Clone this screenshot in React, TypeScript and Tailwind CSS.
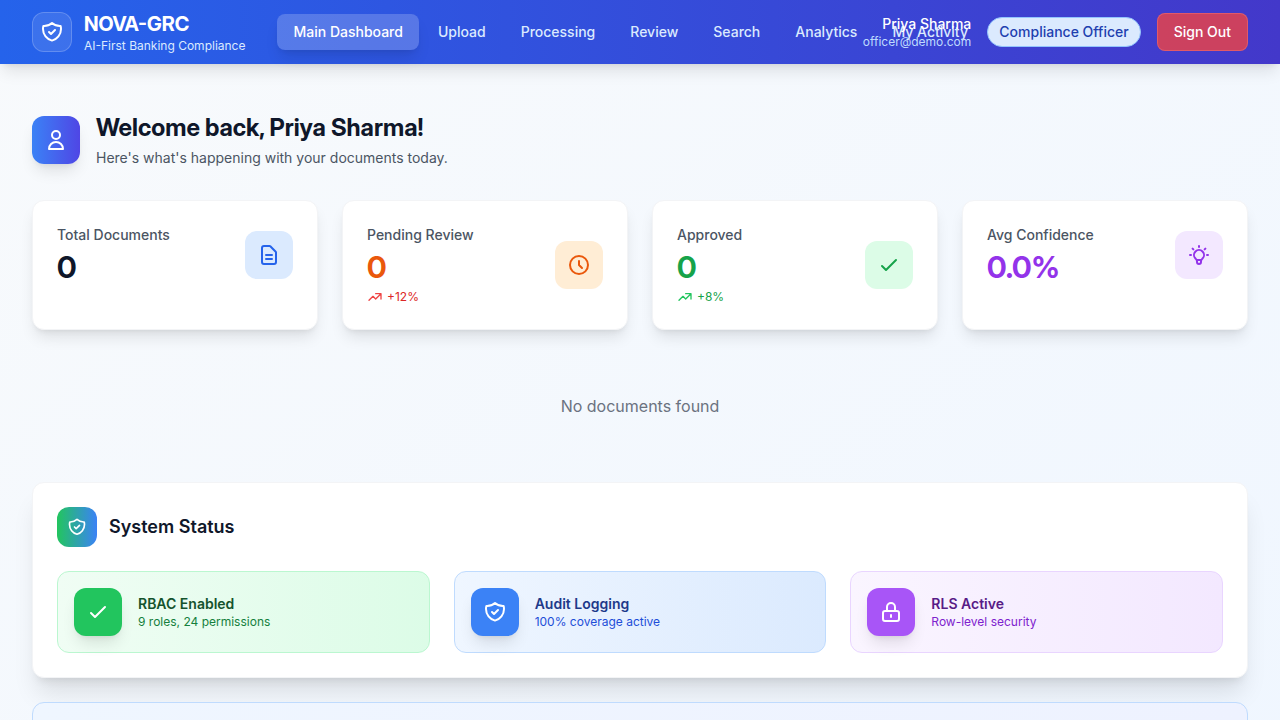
const paths = {
  shield:
    'M9 12l2 2 4-4m5.618-4.016A11.955 11.955 0 0112 2.944a11.955 11.955 0 01-8.618 3.04A12.02 12.02 0 003 9c0 5.591 3.824 10.29 9 11.622 5.176-1.332 9-6.03 9-11.622 0-1.042-.133-2.052-.382-3.016z',
  user: 'M16 7a4 4 0 11-8 0 4 4 0 018 0zM12 14a7 7 0 00-7 7h14a7 7 0 00-7-7z',
  document:
    'M9 12h6m-6 4h6m2 5H7a2 2 0 01-2-2V5a2 2 0 012-2h5.586a1 1 0 01.707.293l5.414 5.414a1 1 0 01.293.707V19a2 2 0 01-2 2z',
  clock: 'M12 8v4l3 3m6-3a9 9 0 11-18 0 9 9 0 0118 0z',
  check: 'M5 13l4 4L19 7',
  trend: 'M13 7h8m0 0v8m0-8l-8 8-4-4-6 6',
  bulb: 'M9.663 17h4.673M12 3v1m6.364 1.636l-.707.707M21 12h-1M4 12H3m3.343-5.657l-.707-.707m2.828 9.9a5 5 0 117.072 0l-.548.547A3.374 3.374 0 0014 18.469V19a2 2 0 11-4 0v-.531c0-.895-.356-1.754-.988-2.386l-.548-.547z',
  lock: 'M12 15v2m-6 4h12a2 2 0 002-2v-6a2 2 0 00-2-2H6a2 2 0 00-2 2v6a2 2 0 002 2zm10-10V7a4 4 0 00-8 0v4h8z',
};

type IconName = keyof typeof paths;

function Icon({ name, className = 'size-6' }: { name: IconName; className?: string }) {
  return (
    <svg
      className={className}
      viewBox="0 0 24 24"
      fill="none"
      stroke="currentColor"
      strokeWidth={2}
      strokeLinecap="round"
      strokeLinejoin="round"
      aria-hidden="true"
    >
      <path d={paths[name]} />
    </svg>
  );
}

const navItems = ['Main Dashboard', 'Upload', 'Processing', 'Review', 'Search', 'Analytics', 'My Activity'];

function Header() {
  return (
    <header className="relative z-10 bg-linear-to-r/srgb from-[#2563eb] to-[#4338ca] shadow-lg">
      <div className="flex h-16 items-center justify-between px-8">
        <div className="flex min-w-0 items-center gap-8">
          <div className="flex shrink-0 items-center gap-3">
            <div className="flex size-10 items-center justify-center rounded-xl border border-white/20 bg-white/10 text-white">
              <Icon name="shield" />
            </div>
            <div className="whitespace-nowrap">
              <div className="font-['Inter_Display','Inter',sans-serif] text-xl font-bold text-white">NOVA-GRC</div>
              <div className="text-xs text-[#dbeafe]">AI-First Banking Compliance</div>
            </div>
          </div>
          <nav className="flex shrink-0 gap-[3px]">
            {navItems.map((item, i) => (
              <button
                key={item}
                type="button"
                aria-current={i === 0 ? 'page' : undefined}
                className={
                  i === 0
                    ? 'rounded-lg bg-white/20 px-4 py-2 text-sm font-medium whitespace-nowrap text-white shadow-lg'
                    : 'rounded-lg px-4 py-2 text-sm font-medium whitespace-nowrap text-[#dbeafe]'
                }
              >
                {item}
              </button>
            ))}
          </nav>
        </div>
        <div className="flex shrink-0 items-center gap-4">
          <div className="text-right">
            <div className="text-sm font-medium text-white">Priya Sharma</div>
            <div className="text-xs text-[#bfdbfe]">officer@demo.com</div>
          </div>
          <span className="rounded-full border border-[#93c5fd] bg-[#dbeafe] px-[11px] py-1 text-sm font-medium text-[#1e40af]">
            Compliance Officer
          </span>
          <button
            type="button"
            className="rounded-lg border border-[#f87171]/50 bg-[#ef4444]/80 px-4 py-2 text-sm font-medium text-white"
          >
            Sign Out
          </button>
        </div>
      </div>
    </header>
  );
}

interface Stat {
  label: string;
  value: string;
  icon: IconName;
  valueClass: string;
  iconClass: string;
  trend?: string;
  trendIconClass?: string;
  trendClass?: string;
}

const stats: Stat[] = [
  {
    label: 'Total Documents',
    value: '0',
    icon: 'document',
    valueClass: 'text-[#0f172a]',
    iconClass: 'bg-[#dbeafe] text-[#2563eb]',
  },
  {
    label: 'Pending Review',
    value: '0',
    icon: 'clock',
    valueClass: 'text-[#ea580c]',
    iconClass: 'bg-[#ffedd5] text-[#ea580c]',
    trend: '+12%',
    trendIconClass: 'text-[#ef4444]',
    trendClass: 'text-[#dc2626]',
  },
  {
    label: 'Approved',
    value: '0',
    icon: 'check',
    valueClass: 'text-[#16a34a]',
    iconClass: 'bg-[#dcfce7] text-[#16a34a]',
    trend: '+8%',
    trendIconClass: 'text-[#22c55e]',
    trendClass: 'text-[#16a34a]',
  },
  {
    label: 'Avg Confidence',
    value: '0.0%',
    icon: 'bulb',
    valueClass: 'text-[#9333ea]',
    iconClass: 'bg-[#f3e8ff] text-[#9333ea]',
  },
];

function StatCard({ stat }: { stat: Stat }) {
  return (
    <div className="rounded-xl border border-[#f3f4f6] bg-white p-6 shadow-lg">
      <div className="flex items-center justify-between">
        <div>
          <p className="text-sm font-medium text-[#4b5563]">{stat.label}</p>
          <p className={`mt-1 font-['Inter_Display','Inter',sans-serif] text-3xl font-bold ${stat.valueClass}`}>
            {stat.value}
          </p>
          {stat.trend && (
            <p className="mt-1 flex items-center gap-1 text-xs">
              <Icon name="trend" className={`size-4 ${stat.trendIconClass}`} />
              <span className={stat.trendClass}>{stat.trend}</span>
            </p>
          )}
        </div>
        <div className={`flex size-12 items-center justify-center rounded-xl ${stat.iconClass}`}>
          <Icon name={stat.icon} />
        </div>
      </div>
    </div>
  );
}

interface StatusProps {
  icon: IconName;
  title: string;
  detail: string;
  tileClass: string;
  iconClass: string;
  titleClass: string;
  detailClass: string;
}

const statuses: StatusProps[] = [
  {
    icon: 'check',
    title: 'RBAC Enabled',
    detail: '9 roles, 24 permissions',
    tileClass: 'border-[#bbf7d0] from-[#f0fdf4] to-[#dcfce7]',
    iconClass: 'bg-[#22c55e]',
    titleClass: 'text-[#14532d]',
    detailClass: 'text-[#15803d]',
  },
  {
    icon: 'shield',
    title: 'Audit Logging',
    detail: '100% coverage active',
    tileClass: 'border-[#bfdbfe] from-[#eff6ff] to-[#dbeafe]',
    iconClass: 'bg-[#3b82f6]',
    titleClass: 'text-[#1e3a8a]',
    detailClass: 'text-[#1d4ed8]',
  },
  {
    icon: 'lock',
    title: 'RLS Active',
    detail: 'Row-level security',
    tileClass: 'border-[#e9d5ff] from-[#faf5ff] to-[#f3e8ff]',
    iconClass: 'bg-[#a855f7]',
    titleClass: 'text-[#581c87]',
    detailClass: 'text-[#7e22ce]',
  },
];

function StatusTile({ icon, title, detail, tileClass, iconClass, titleClass, detailClass }: StatusProps) {
  return (
    <div className={`flex items-center gap-4 rounded-xl border bg-linear-to-r/srgb p-4 ${tileClass}`}>
      <div className={`flex size-12 shrink-0 items-center justify-center rounded-xl text-white shadow-lg ${iconClass}`}>
        <Icon name={icon} />
      </div>
      <div>
        <p className={`text-sm font-semibold ${titleClass}`}>{title}</p>
        <p className={`text-xs ${detailClass}`}>{detail}</p>
      </div>
    </div>
  );
}

export default function App() {
  return (
    <div className="min-h-screen overflow-x-hidden bg-linear-to-br/srgb from-[#f8fafc] to-[#eff6ff] font-['Inter',sans-serif] antialiased">
      <Header />
      <main className="px-8 py-12">
        <div className="flex items-center gap-4">
          <div className="flex size-12 items-center justify-center rounded-xl bg-linear-to-r/srgb from-[#3b82f6] to-[#4f46e5] text-white shadow-lg">
            <Icon name="user" />
          </div>
          <div>
            <h1 className="font-['Inter_Display','Inter',sans-serif] text-2xl font-bold text-[#0f172a]">
              Welcome back, Priya Sharma!
            </h1>
            <p className="mt-1 text-sm text-[#4b5563]">Here's what's happening with your documents today.</p>
          </div>
        </div>

        <section className="mt-8 grid grid-cols-4 gap-6">
          {stats.map((stat) => (
            <StatCard key={stat.label} stat={stat} />
          ))}
        </section>

        <p className="my-8 py-8 text-center text-base text-[#6b7280]">No documents found</p>

        <section className="rounded-xl border border-[#f3f4f6] bg-white p-6 shadow-xl">
          <div className="mb-6 flex items-center gap-3">
            <div className="flex size-10 items-center justify-center rounded-xl bg-linear-to-r/srgb from-[#22c55e] to-[#3b82f6] text-white">
              <Icon name="shield" className="size-5" />
            </div>
            <h2 className="text-lg font-semibold text-[#0f172a]">System Status</h2>
          </div>
          <div className="grid grid-cols-3 gap-6">
            {statuses.map((status) => (
              <StatusTile key={status.title} {...status} />
            ))}
          </div>
        </section>

        <section className="mt-6 min-h-40 rounded-xl border border-[#bfdbfe] bg-linear-to-r/srgb from-[#eff6ff] to-[#eef2ff] p-6" />
      </main>
    </div>
  );
}
